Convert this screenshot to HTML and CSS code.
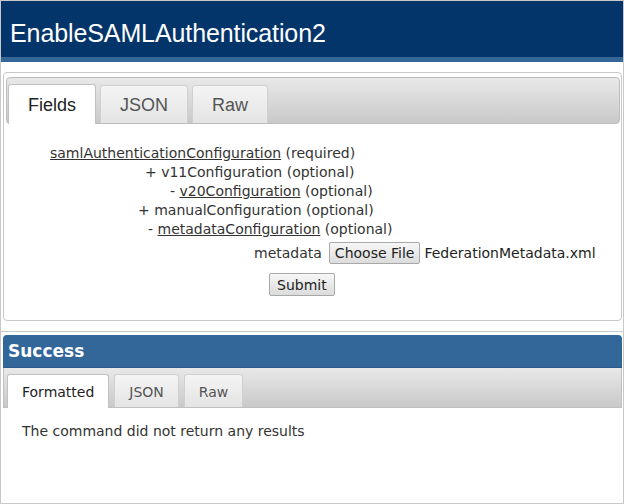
FILE: index.html
```html
<!DOCTYPE html>
<html lang="en">
<head>
<meta charset="utf-8">
<title>EnableSAMLAuthentication2</title>
<link rel="stylesheet" href="styles.css">
</head>
<body>
<div class="frame">
  <header class="title-bar"><h1>EnableSAMLAuthentication2</h1></header>

  <section class="panel panel-form">
    <ul class="tabs tabs-lg">
      <li class="tab active">Fields</li>
      <li class="tab">JSON</li>
      <li class="tab">Raw</li>
    </ul>
    <div class="form-body">
      <div class="row r1"><a href="#">samlAuthenticationConfiguration</a> (required)</div>
      <div class="row r2">+ v11Configuration (optional)</div>
      <div class="row r3">- <a href="#">v20Configuration</a> (optional)</div>
      <div class="row r4">+ manualConfiguration (optional)</div>
      <div class="row r5">- <a href="#">metadataConfiguration</a> (optional)</div>
      <div class="file-row">
        <span class="file-label">metadata</span>
        <span class="btn btn-file">Choose File</span>
        <span class="file-name">FederationMetadata.xml</span>
      </div>
      <div class="submit-row"><button class="btn btn-submit" type="button">Submit</button></div>
    </div>
  </section>

  <section class="panel panel-result">
    <div class="result-head">Success</div>
    <ul class="tabs tabs-sm">
      <li class="tab active">Formatted</li>
      <li class="tab">JSON</li>
      <li class="tab">Raw</li>
    </ul>
    <div class="result-body">The command did not return any results</div>
  </section>
</div>
</body>
</html>
```

FILE: styles.css
```css
* { box-sizing: border-box; }
html, body { margin: 0; padding: 0; }
body {
  font-family: "DejaVu Sans", Verdana, sans-serif;
  font-size: 14px;
  color: #333;
  background: #fff;
}
.frame {
  width: 624px;
  height: 504px;
  border: 1px solid #c8c8c8;
  display: flex;
  flex-direction: column;
  overflow: hidden;
}
.title-bar {
  height: 61px;
  flex: none;
  background: #03356a;
  border-bottom: 5px solid #336699;
  padding: 8px 0 0 9px;
  display: flex;
  align-items: center;
}
.title-bar h1 {
  margin: 0;
  font-family: "Liberation Sans", Arial, sans-serif;
  font-weight: 400;
  font-size: 25px;
  color: #fff;
  letter-spacing: -0.1px;
}

.panel-form {
  flex: none;
  margin: 10px 1px 0 2px;
  border: 1px solid #c8c8c8;
  border-radius: 4px;
  padding: 4px 1px 0 2px;
}
.tabs {
  list-style: none;
  margin: 0;
  display: flex;
  align-items: flex-end;
  background: linear-gradient(#e8e8e8, #c9c9c9);
}
.tabs-lg {
  height: 47px;
  border: 1px solid #bcbcbc;
  border-radius: 4px;
  padding: 0 2px 0 1px;
  gap: 4px;
}
.tab {
  display: flex;
  align-items: center;
  border: 1px solid #d0d0d0;
  border-bottom: none;
  border-radius: 3px 3px 0 0;
  background: linear-gradient(#f4f4f4, #e4e4e4);
  color: #555;
}
.tab.active {
  background: #fff;
  border-color: #c2c2c2;
  color: #222;
  margin-bottom: -1px;
}
.tabs-lg .tab {
  font-family: "Liberation Sans", Arial, sans-serif;
  font-size: 18px;
  height: 38px;
  padding: 2px 19px 0;
}
.tabs-lg .tab.active { height: 40px; }

.form-body {
  padding: 20px 0 24px;
  line-height: 19px;
}
.row { white-space: nowrap; }
.r1 { padding-left: 44px; }
.r2 { padding-left: 139px; }
.r3 { padding-left: 164px; }
.r4 { padding-left: 132px; }
.r5 { padding-left: 142px; }
.row a { color: #333; text-decoration: underline; }

.file-row {
  display: flex;
  align-items: center;
  height: 22px;
  margin-top: 3px;
  padding-left: 248px;
  white-space: nowrap;
}
.file-label { margin-right: 7px; }
.file-name { margin-left: 4px; color: #222; }
.btn {
  display: inline-flex;
  align-items: center;
  justify-content: center;
  font-family: inherit;
  font-size: 14px;
  color: #222;
  border: 1px solid #a8a8a8;
  border-radius: 2px;
  background: linear-gradient(#f7f7f7, #dcdcdc);
}
.btn-file { height: 22px; padding: 0 5px; }
.submit-row { margin-top: 9px; padding-left: 263px; }
.btn-submit { height: 23px; padding: 0 7px; margin: 0; }

.panel-result {
  flex: 1;
  margin: 10px 0 0;
  border-top: 1px solid #c8c8c8;
  padding: 3px 1px 0 2px;
}
.result-head {
  height: 33px;
  background: #336699;
  border-bottom: 1px solid #2c5b8c;
  border-radius: 4px 4px 0 0;
  color: #fff;
  font-weight: 700;
  font-size: 17px;
  display: flex;
  align-items: center;
  padding-left: 5px;
}
.tabs-sm {
  height: 40px;
  border: 1px solid #c0c0c0;
  border-top: none;
  padding: 0 0 0 3px;
  gap: 5px;
}
.tabs-sm .tab {
  height: 33px;
  padding: 1px 14px 0;
  font-size: 14px;
}
.tabs-sm .tab.active { height: 34px; }
.result-body {
  padding: 14px 0 0 19px;
  line-height: 19px;
}
```
